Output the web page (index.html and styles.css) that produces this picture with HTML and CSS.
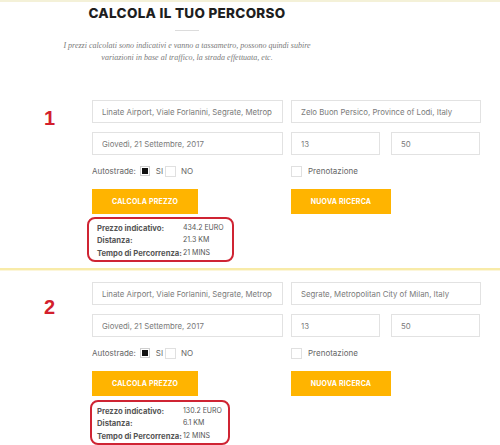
FILE: index.html
```html
<!DOCTYPE html>
<html lang="it">
<head>
<meta charset="utf-8">
<title>Calcola il tuo percorso</title>
<link rel="stylesheet" href="styles.css">
</head>
<body>
<div class="topline"></div>
<header class="intro">
  <h1 class="title">CALCOLA IL TUO PERCORSO</h1>
  <div class="rule"></div>
  <p class="note">I prezzi calcolati sono indicativi e vanno a tassametro, possono quindi subire<br>variazioni in base al traffico, la strada effettuata, etc.</p>
</header>

<section class="calc calc-1">
  <div class="num num-1">1</div>
  <div class="form">
    <div class="row">
      <input class="field" readonly value="Linate Airport, Viale Forlanini, Segrate, Metropolitan City of Milan, Italy">
      <input class="field" readonly value="Zelo Buon Persico, Province of Lodi, Italy">
    </div>
    <div class="row">
      <input class="field" readonly value="Giovedì, 21 Settembre, 2017">
      <div class="time">
        <input class="field" readonly value="13">
        <input class="field" readonly value="50">
      </div>
    </div>
    <div class="row checks">
      <div class="opt">
        <span class="lbl">Autostrade:</span>
        <span class="box checked"></span><span class="lbl si">SI</span>
        <span class="box empty"></span><span class="lbl">NO</span>
      </div>
      <div class="opt">
        <span class="box pbox"></span><span class="lbl">Prenotazione</span>
      </div>
    </div>
    <div class="row buttons">
      <button class="btn btn-calc">CALCOLA PREZZO</button>
      <button class="btn btn-new">NUOVA RICERCA</button>
    </div>
    <div class="result result-1">
      <span class="k">Prezzo indicativo:</span><span class="v">434.2 EURO</span>
      <span class="k">Distanza:</span><span class="v">21.3 KM</span>
      <span class="k">Tempo di Percorrenza:</span><span class="v">21 MINS</span>
    </div>
  </div>
</section>

<div class="sep"></div>

<section class="calc calc-2">
  <div class="num num-2">2</div>
  <div class="form">
    <div class="row">
      <input class="field" readonly value="Linate Airport, Viale Forlanini, Segrate, Metropolitan City of Milan, Italy">
      <input class="field" readonly value="Segrate, Metropolitan City of Milan, Italy">
    </div>
    <div class="row">
      <input class="field" readonly value="Giovedì, 21 Settembre, 2017">
      <div class="time">
        <input class="field" readonly value="13">
        <input class="field" readonly value="50">
      </div>
    </div>
    <div class="row checks">
      <div class="opt">
        <span class="lbl">Autostrade:</span>
        <span class="box checked"></span><span class="lbl si">SI</span>
        <span class="box empty"></span><span class="lbl">NO</span>
      </div>
      <div class="opt">
        <span class="box pbox"></span><span class="lbl">Prenotazione</span>
      </div>
    </div>
    <div class="row buttons">
      <button class="btn btn-calc">CALCOLA PREZZO</button>
      <button class="btn btn-new">NUOVA RICERCA</button>
    </div>
    <div class="result result-2">
      <span class="k">Prezzo indicativo:</span><span class="v">130.2 EURO</span>
      <span class="k">Distanza:</span><span class="v">6.1 KM</span>
      <span class="k">Tempo di Percorrenza:</span><span class="v">12 MINS</span>
    </div>
  </div>
</section>
</body>
</html>
```

FILE: styles.css
```css
* { box-sizing: border-box; }
html, body { margin: 0; padding: 0; background: #fff; }
body {
  width: 500px;
  font-family: Inter, "Liberation Sans", sans-serif;
  color: #666;
}
.topline { height: 2px; background: #f4f1d8; }

.intro { width: 374px; text-align: center; padding-top: 3px; }
.title {
  margin: 0;
  font-family: Inter, "Liberation Sans", sans-serif;
  font-weight: 800;
  font-size: 13.5px;
  line-height: 17px;
  color: #1e1e1e;
  letter-spacing: 0.3px;
}
.rule { width: 24px; height: 1px; background: #dcdcdc; margin: 8px auto 0; }
.note {
  margin: 9px 0 0;
  font-family: "Liberation Serif", serif;
  font-style: italic;
  font-size: 8px;
  line-height: 12px;
  color: #7a7a7a;
}

.calc { display: flex; }
.calc-1 { padding-top: 36px; }
.calc-2 { padding-top: 11px; }
.num {
  width: 92px;
  padding-left: 44px;
  font-family: "Liberation Sans", sans-serif;
  font-weight: 700;
  font-size: 20px;
  line-height: 20px;
  color: #d31f2d;
}
.num-1 { margin-top: 8px; }
.num-2 { margin-top: 15px; }

.form { display: flex; flex-direction: column; }
.row { display: grid; grid-template-columns: 191px 190px; column-gap: 8px; }
.row + .row { margin-top: 9px; }
.field {
  display: block;
  width: 100%;
  height: 23px;
  margin: 0;
  border: 1px solid #e2e2e2;
  background: #fff;
  padding: 0 10px 0 9px;
  font-family: Inter, "Liberation Sans", sans-serif;
  font-size: 7.8px;
  color: #7a7a7a;
  outline: none;
}
.time { display: grid; grid-template-columns: 89px 89px; column-gap: 11px; }

.row.checks { margin-top: 10px; height: 12px; }
.opt { display: flex; align-items: center; }
.lbl { font-size: 8px; color: #666; line-height: 12px; }
.box {
  width: 11px; height: 11px;
  border: 1px solid #e0e0e0;
  background: #fff;
}
.box.checked {
  width: 10px; height: 10px;
  margin-left: 4px;
  margin-right: 6px;
  border: 1px solid #cfcfcf;
  background: #111;
  box-shadow: inset 0 0 0 1px #fff;
}
.box.empty { margin-left: 2px; margin-right: 5px; }
.box.pbox { margin-right: 6px; }

.row.buttons { margin-top: 12px; }
.btn {
  height: 25px;
  border: 0;
  background: #ffb400;
  color: #fff;
  font-family: Inter, "Liberation Sans", sans-serif;
  font-weight: 700;
  font-size: 7px;
  letter-spacing: 0.2px;
  padding: 0;
}
.btn-calc { width: 106px; }
.btn-new { width: 100px; }

.result {
  display: grid;
  grid-template-columns: 86px auto;
  border: 2px solid #cf2433;
  border-radius: 8px;
  margin-top: 3px;
  padding: 4px 0 0 0;
  height: 45px;
}
.result-1 { width: 147px; margin-left: -5px; padding-left: 8px; }
.result-2 { width: 140px; margin-left: -2px; padding-left: 5px; margin-top: 4px; }
.k { font-weight: 700; font-size: 7.7px; line-height: 12px; color: #555; white-space: nowrap; }
.v { font-size: 7px; line-height: 10px; color: #555; white-space: nowrap; }

.sep {
  height: 3px;
  margin-top: 6px;
  background: #f8eba8;
  border-bottom: 1px solid #fcf6da;
}
```
